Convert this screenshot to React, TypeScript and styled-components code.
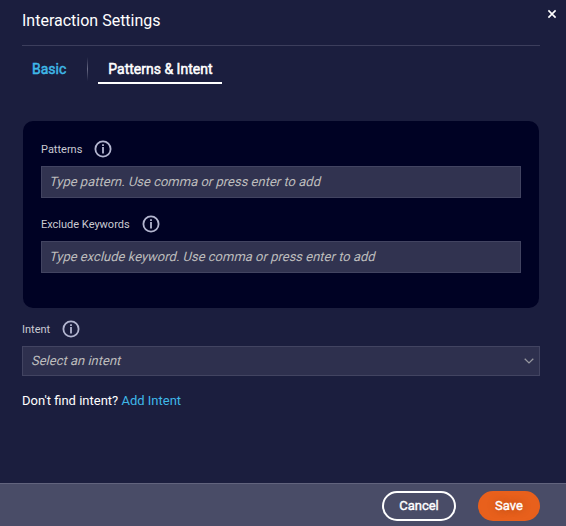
import React from "react";
import styled, { createGlobalStyle } from "styled-components";

const GlobalStyle = createGlobalStyle`
  *, *::before, *::after { box-sizing: border-box; }
  body { margin: 0; background: #1b1e3e; font-family: Roboto, sans-serif; }
  button { font-family: inherit; padding: 0; border: 0; background: none; cursor: pointer; }
`;

const Dialog = styled.section`
  display: flex;
  flex-direction: column;
  width: 566px;
  height: 526px;
  background: #1b1e3e;
  color: #fff;
`;

const Header = styled.header`
  display: flex;
  justify-content: space-between;
  align-items: flex-start;
  height: 46px;
  margin-left: 22px;
  margin-right: 26px;
  padding-top: 9px;
  border-bottom: 1px solid #3c3e5c;
`;

const Title = styled.h1`
  margin: 0;
  font-size: 16px;
  font-weight: 400;
  line-height: 23px;
`;

const CloseButton = styled.button`
  display: flex;
  width: 10px;
  height: 10px;
  margin-right: -17px;
  color: #fff;
`;

const Tabs = styled.nav`
  display: flex;
  height: 38px;
  margin-left: 22px;
`;

const Tab = styled.button<{ $active?: boolean }>`
  height: 38px;
  padding: 0 10px;
  padding-top: 11px;
  display: flex;
  align-items: flex-start;
  font-size: 14px;
  line-height: 24px;
  font-weight: 400;
  -webkit-text-stroke: 0.5px currentColor;
  color: ${(p) => (p.$active ? "#fff" : "#3fb8e8")};
  border-bottom: 2px solid ${(p) => (p.$active ? "#fff" : "transparent")};
`;

const TabSeparator = styled.span`
  width: 1px;
  height: 24px;
  margin: 11px 10px 0 11px;
  background: linear-gradient(#1b1e3e, #686a84, #1b1e3e);
`;

const Content = styled.main`
  flex: 1;
  padding: 37px 26px 0 22px;
`;

const Panel = styled.div`
  height: 187px;
  margin: 0 1px;
  padding: 18px 18px 0;
  border-radius: 10px;
  background: #000224;
`;

const Label = styled.div<{ $gap?: number }>`
  display: flex;
  align-items: center;
  gap: 12px;
  height: 20px;
  margin-top: ${(p) => p.$gap ?? 0}px;
  font-size: 11px;
  color: #c9cad2;
`;

const Field = styled.div<{ $select?: boolean }>`
  display: flex;
  align-items: center;
  justify-content: space-between;
  height: ${(p) => (p.$select ? 30 : 32)}px;
  margin-top: 7px;
  padding: 0 5px 0 ${(p) => (p.$select ? 8 : 7)}px;
  border: 1px solid #424461;
  background: ${(p) => (p.$select ? "#2e304e" : "#313350")};
`;

const Placeholder = styled.span`
  font-size: 13px;
  line-height: 16px;
  margin-bottom: 1px;
  color: #bdbdbd;
  transform: skewX(-14deg);
  transform-origin: 0 12px;
`;

const Hint = styled.p`
  margin: 15px 0 0;
  font-size: 13px;
  line-height: 20px;
`;

const HintLink = styled.a`
  color: #3fb8e8;
`;

const Footer = styled.footer`
  display: flex;
  gap: 22px;
  justify-content: flex-end;
  height: 43px;
  padding: 7px 26px 0 0;
  border-top: 1px solid #62647e;
  background: #494c67;
`;

const ActionButton = styled.button<{ $primary?: boolean }>`
  width: ${(p) => (p.$primary ? 62 : 74)}px;
  height: 30px;
  padding-bottom: 1px;
  border-radius: 15px;
  border: 2px solid ${(p) => (p.$primary ? "#e8601c" : "#fff")};
  background: ${(p) => (p.$primary ? "#e8601c" : "transparent")};
  color: #fff;
  font-size: 13px;
  font-weight: 400;
  -webkit-text-stroke: 0.4px currentColor;
  text-shadow: ${(p) => (p.$primary ? "0 0 8px rgba(0, 0, 0, 0.35)" : "none")};
`;

const InfoIcon = () => (
  <svg width="18" height="18" viewBox="0 0 18 18" fill="none" aria-hidden="true">
    <circle cx="9" cy="9" r="7.6" stroke="#b3b6d0" strokeWidth="1.8" />
    <path d="M9 4.2v1.9M9 7v6.4" stroke="#b3b6d0" strokeWidth="1.8" />
  </svg>
);

export default function App() {
  return (
    <>
      <GlobalStyle />
      <Dialog>
        <Header>
          <Title>Interaction Settings</Title>
          <CloseButton aria-label="Close">
            <svg width="10" height="10" viewBox="0 0 10 10" fill="none">
              <path d="M1.4 1.4 8.6 8.6M8.6 1.4 1.4 8.6" stroke="currentColor" strokeWidth="1.6" />
            </svg>
          </CloseButton>
        </Header>
        <Tabs>
          <Tab>Basic</Tab>
          <TabSeparator />
          <Tab $active>Patterns &amp; Intent</Tab>
        </Tabs>
        <Content>
          <Panel>
            <Label>Patterns <InfoIcon /></Label>
            <Field><Placeholder>Type pattern. Use comma or press enter to add</Placeholder></Field>
            <Label $gap={16}>Exclude Keywords <InfoIcon /></Label>
            <Field><Placeholder>Type exclude keyword. Use comma or press enter to add</Placeholder></Field>
          </Panel>
          <Label $gap={11}>Intent <InfoIcon /></Label>
          <Field $select>
            <Placeholder>Select an intent</Placeholder>
            <svg width="10" height="6" viewBox="0 0 10 6" fill="none" aria-hidden="true">
              <path d="M.7.7 5 4.9 9.3.7" stroke="#96979f" strokeWidth="1.3" />
            </svg>
          </Field>
          <Hint>
            Don't find intent? <HintLink>Add Intent</HintLink>
          </Hint>
        </Content>
        <Footer>
          <ActionButton>Cancel</ActionButton>
          <ActionButton $primary>Save</ActionButton>
        </Footer>
      </Dialog>
    </>
  );
}
